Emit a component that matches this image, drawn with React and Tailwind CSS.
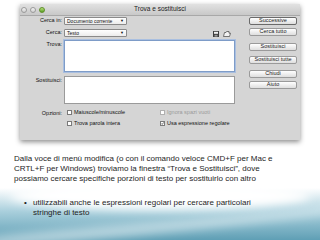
import React from "react";

function Btn({ children, strong }) {
  return (
    <div
      className={`h-[8px] w-[48px] rounded-[2px] border ${
        strong ? "border-[#6a6a6a]" : "border-[#9a9a9a]"
      } bg-gradient-to-b from-[#ffffff] to-[#dedede] flex items-center justify-center text-[5.5px] leading-none text-[#222]`}
    >
      {children}
    </div>
  );
}

function Select({ children }) {
  return (
    <div className="h-[8px] w-[63px] rounded-[1px] border border-[#8a8a8a] bg-gradient-to-b from-[#ffffff] to-[#ececec] flex items-center justify-between pl-[2px] pr-[2px] text-[5px] leading-none text-[#111]">
      <span>{children}</span>
      <span className="text-[4px]">▼</span>
    </div>
  );
}

function Check({ checked, disabled, children }) {
  return (
    <div className="flex items-center gap-[2px]">
      <div
        className={`w-[5px] h-[5px] border ${
          disabled ? "border-[#b0b0b0]" : "border-[#7a7a7a]"
        } bg-white flex items-center justify-center`}
      >
        {checked && (
          <svg width="5" height="5" viewBox="0 0 5 5">
            <path d="M0.6 2.6 L2 4 L4.6 0.6" stroke="#111" strokeWidth="1" fill="none" />
          </svg>
        )}
      </div>
      <span className={`text-[5.5px] leading-none ${disabled ? "text-[#9a9a9a]" : "text-[#111]"}`}>
        {children}
      </span>
    </div>
  );
}

export default function App() {
  return (
    <div className="relative w-[320px] h-[240px] bg-white overflow-hidden font-['Liberation_Sans',Arial,sans-serif]">
      <svg className="absolute inset-0" width="320" height="240" viewBox="0 0 320 240">
        <defs>
          <linearGradient id="bg" x1="0" y1="0" x2="0" y2="1">
            <stop offset="0" stopColor="#ffffff" />
            <stop offset="0.45" stopColor="#a9cfdc" />
            <stop offset="1" stopColor="#5f9fb5" />
          </linearGradient>
          <filter id="blur" x="-20%" y="-100%" width="140%" height="300%">
            <feGaussianBlur stdDeviation="5" />
          </filter>
        </defs>
        <rect x="0" y="188" width="320" height="52" fill="url(#bg)" />
        <ellipse cx="160" cy="196" rx="150" ry="14" fill="#ffffff" filter="url(#blur)" />
        <path d="M-20 238 C80 226 200 222 340 206 L340 212 C200 230 90 240 -20 250 Z" fill="#ffffff" opacity="0.5" filter="url(#blur)" />
      </svg>

      <div className="relative flex flex-col">
        {/* dialog */}
        <div className="ml-[20px] mt-[4px] w-[280px] h-[136px] bg-[#d5d5d5] shadow-[0_2px_5px_rgba(0,0,0,0.45)] flex flex-col">
          <div className="h-[12px] grid grid-cols-[1fr_auto_1fr] items-center bg-gradient-to-b from-[#e2e2e2] to-[#c8c8c8] border-b border-[#a8a8a8]">
            <div className="flex items-center gap-[3px] pl-[1px]">
              <div className="w-[6px] h-[6px] rounded-full border border-[#9a9a9a] bg-gradient-to-b from-[#f4f4f4] to-[#cfcfcf]" />
              <div className="w-[6px] h-[6px] rounded-full border border-[#9a9a9a] bg-gradient-to-b from-[#f4f4f4] to-[#cfcfcf]" />
              <div className="w-[6px] h-[6px] rounded-full border border-[#5f8f2a] bg-gradient-to-b from-[#b8e07a] to-[#5aa022]" />
            </div>
            <div className="text-[6.5px] leading-none text-[#222]">Trova e sostituisci</div>
            <div />
          </div>

          <div className="flex pt-[1px]">
            {/* left */}
            <div className="w-[215px] flex flex-col">
              <div className="flex items-center h-[8px]">
                <div className="w-[42px] text-right text-[5.5px] leading-none text-[#111]">Cerca in:</div>
                <div className="ml-[2px]">
                  <Select>Documento corrente</Select>
                </div>
              </div>
              <div className="flex items-center h-[8px] mt-[4px]">
                <div className="w-[42px] text-right text-[5.5px] leading-none text-[#111]">Cerca:</div>
                <div className="ml-[2px]">
                  <Select>Testo</Select>
                </div>
                <div className="ml-auto mr-[4px] flex items-center gap-[4px] pt-[2px]">
                  <svg width="6" height="6" viewBox="0 0 6 6">
                    <rect x="0" y="0" width="6" height="6" fill="#3d3d3d" />
                    <rect x="1" y="0.8" width="4" height="2" fill="#f2f2f2" />
                    <rect x="1.5" y="3.8" width="3" height="1.8" fill="#9a9a9a" />
                  </svg>
                  <svg width="8" height="6" viewBox="0 0 8 6">
                    <path d="M0.5 5.5 L1.5 1.5 L3 1.5 L3.6 0.5 L6 0.5 L6 2.2 L7.5 2.2 L6.5 5.5 Z" fill="#f2f2f2" stroke="#444" strokeWidth="0.7" />
                  </svg>
                </div>
              </div>
              <div className="flex mt-[3px]">
                <div className="w-[42px] text-right text-[5.5px] leading-none text-[#111] pt-[2px]">Trova:</div>
                <div className="ml-[2px] w-[171px] h-[32px] bg-white border border-[#7e9cc8] shadow-[0_0_0_1px_#a9bfe0]" />
              </div>
              <div className="flex mt-[4px]">
                <div className="w-[42px] text-right text-[5.5px] leading-none text-[#111] pt-[2px]">Sostituisci:</div>
                <div className="ml-[2px] w-[171px] h-[28px] bg-white border border-[#9a9a9a]" />
              </div>
              <div className="flex mt-[6px]">
                <div className="w-[42px] text-right text-[5.5px] leading-none text-[#111] pt-[1px]">Opzioni:</div>
                <div className="ml-[5px] flex">
                  <div className="w-[93px] flex flex-col gap-[5px]">
                    <Check>Maiuscole/minuscole</Check>
                    <Check>Trova parola intera</Check>
                  </div>
                  <div className="flex flex-col gap-[5px]">
                    <Check disabled>Ignora spazi vuoti</Check>
                    <Check checked>Usa espressione regolare</Check>
                  </div>
                </div>
              </div>
            </div>
            {/* right buttons */}
            <div className="ml-[14px] flex flex-col">
              <Btn strong>Successive</Btn>
              <div className="mt-[3px]"><Btn>Cerca tutto</Btn></div>
              <div className="mt-[7px]"><Btn>Sostituisci</Btn></div>
              <div className="mt-[5px]"><Btn>Sostituisci tutte</Btn></div>
              <div className="mt-[6px]"><Btn>Chiudi</Btn></div>
              <div className="mt-[3px]"><Btn>Aiuto</Btn></div>
            </div>
          </div>
        </div>

        {/* slide text */}
        <div className="mt-[14px] pl-[14px] text-[8px] leading-[10px] text-[#1e1e1e] whitespace-nowrap">
          Dalla voce di menù modifica (o con il comando veloce CMD+F per Mac e
          <br />
          CRTL+F per Windows) troviamo la finestra “Trova e Sostituisci”, dove
          <br />
          possiamo cercare specifiche porzioni di testo per sostituirlo con altro
        </div>
        <div className="mt-[14px] pl-[24px] flex text-[8px] leading-[10px] text-[#1e1e1e] whitespace-nowrap">
          <span className="w-[9px]">•</span>
          <span>
            utilizzabili anche le espressioni regolari per cercare particolari
            <br />
            stringhe di testo
          </span>
        </div>
      </div>
    </div>
  );
}
